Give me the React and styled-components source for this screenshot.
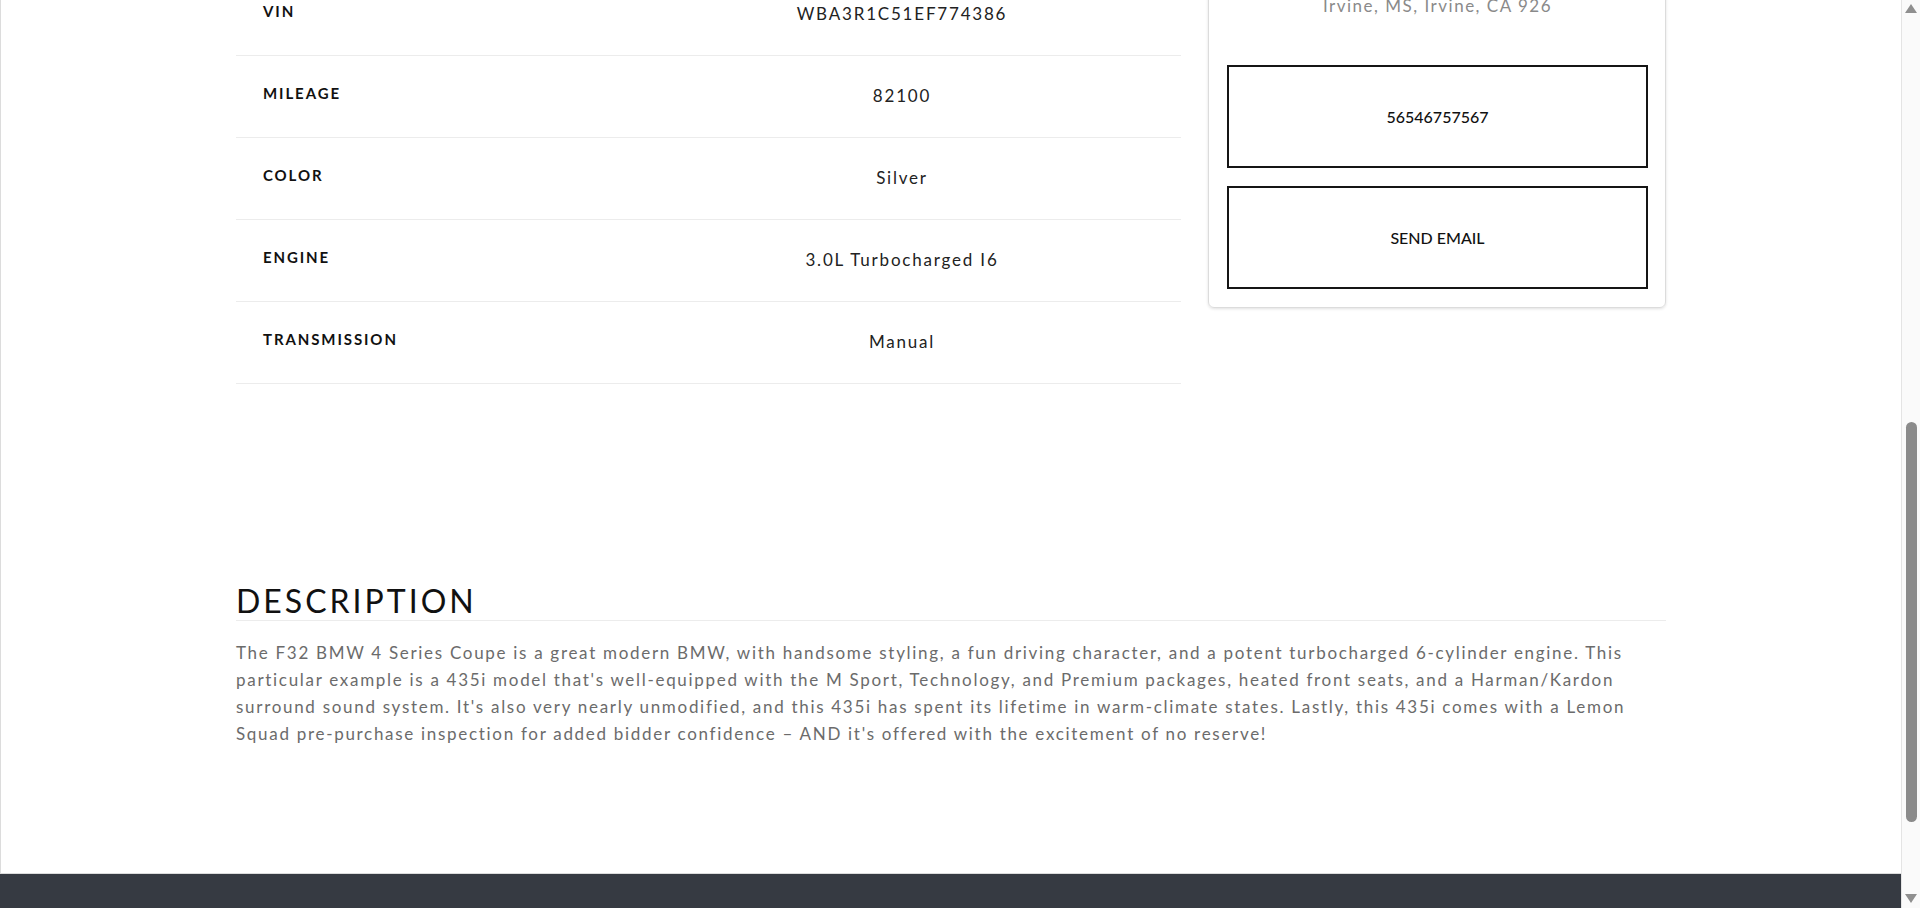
import React from "react";
import styled, { createGlobalStyle } from "styled-components";

const GlobalStyle = createGlobalStyle`
  body {
    margin: 0;
    font-family: Lato, "Open Sans", sans-serif;
    background: #fff;
  }
`;

const Page = styled.div`
  height: 100vh;
  display: flex;
  overflow: hidden;
`;

const Viewport = styled.div`
  flex: 1;
  min-width: 0;
  display: flex;
  flex-direction: column;
`;

const Main = styled.main`
  flex: 1;
  overflow: hidden;
  border-left: 1px solid #dcdcdc;
  border-bottom: 1px solid #dcdcdc;
`;

const Container = styled.div`
  width: 1430px;
  margin: -26px auto 0;
`;

const TopSection = styled.section`
  display: grid;
  grid-template-columns: 945px 458px;
  column-gap: 27px;
  align-items: start;
`;

const SpecTable = styled.div`
  display: flex;
  flex-direction: column;
`;

const SpecRow = styled.div`
  display: grid;
  grid-template-columns: 387px 1fr;
  height: 81px;
  border-bottom: 1px solid #ececec;
`;

const SpecLabel = styled.div`
  padding: 28px 0 0 27px;
  font-size: 15px;
  line-height: 18px;
  font-weight: 700;
  letter-spacing: 1.9px;
  color: #111;
  text-transform: uppercase;
`;

const SpecValue = styled.div`
  padding-top: 29px;
  text-align: center;
  font-size: 17px;
  line-height: 22px;
  font-weight: 400;
  letter-spacing: 1.8px;
  color: #222;
`;

const DealerCard = styled.aside`
  border: 1px solid #dcdcdc;
  border-radius: 6px;
  box-shadow: 0 1px 3px rgba(0, 0, 0, 0.12);
  padding: 19px 17px 18px 18px;
  display: flex;
  flex-direction: column;
`;

const Address = styled.p`
  margin: 0 0 47px;
  text-align: center;
  font-size: 17px;
  line-height: 24px;
  letter-spacing: 1.5px;
  color: #8a8a8a;
`;

const ContactButton = styled.button`
  height: 103px;
  margin-bottom: ${(p) => (p.$last ? "0" : "18px")};
  border: 2px solid #151515;
  background: #fff;
  font-family: Lato, "Open Sans", sans-serif;
  font-size: 16px;
  font-weight: 500;
  color: #111;
  cursor: pointer;
`;

const Description = styled.section`
  margin-top: 198px;
`;

const Heading = styled.h2`
  margin: 0;
  font-size: 32px;
  line-height: 38px;
  font-weight: 400;
  letter-spacing: 3px;
  color: #111;
  border-bottom: 1px solid #ececec;
`;

const Body = styled.p`
  margin: 18px 0 0;
  font-size: 17px;
  line-height: 27px;
  letter-spacing: 1.7px;
  color: #6b6b6b;
`;

const Footer = styled.footer`
  height: 34px;
  flex-shrink: 0;
  background: #363a42;
`;

const ScrollTrack = styled.div`
  width: 18px;
  flex-shrink: 0;
  border-left: 1px solid #e4e4e4;
  background: #fafafa;
  display: flex;
  flex-direction: column;
  align-items: center;
  padding: 4px 0 5px;
`;

const Arrow = styled.span`
  width: 0;
  height: 0;
  border-left: 6px solid transparent;
  border-right: 6px solid transparent;
  ${(p) =>
    p.$down
      ? "border-top: 9px solid #8f8f8f; margin-top: auto;"
      : "border-bottom: 9px solid #8f8f8f;"}
`;

const Thumb = styled.span`
  width: 11px;
  height: 400px;
  margin-top: 409px;
  border-radius: 6px;
  background: #8b8b8b;
`;

const specs = [
  ["VIN", "WBA3R1C51EF774386"],
  ["Mileage", "82100"],
  ["Color", "Silver"],
  ["Engine", "3.0L Turbocharged I6"],
  ["Transmission", "Manual"],
];

export default function App() {
  return (
    <>
      <GlobalStyle />
      <Page>
        <Viewport>
          <Main>
            <Container>
              <TopSection>
                <SpecTable>
                  {specs.map(([label, value]) => (
                    <SpecRow key={label}>
                      <SpecLabel>{label}</SpecLabel>
                      <SpecValue>{value}</SpecValue>
                    </SpecRow>
                  ))}
                </SpecTable>
                <DealerCard>
                  <Address>Irvine, MS, Irvine, CA 926</Address>
                  <ContactButton>56546757567</ContactButton>
                  <ContactButton $last>SEND EMAIL</ContactButton>
                </DealerCard>
              </TopSection>
              <Description>
                <Heading>DESCRIPTION</Heading>
                <Body>
                  The F32 BMW 4 Series Coupe is a great modern BMW, with
                  handsome styling, a fun driving character, and a potent
                  turbocharged 6-cylinder engine. This particular example is a
                  435i model that's well-equipped with the M Sport, Technology,
                  and Premium packages, heated front seats, and a Harman/Kardon
                  surround sound system. It's also very nearly unmodified, and
                  this 435i has spent its lifetime in warm-climate states.
                  Lastly, this 435i comes with a Lemon Squad pre-purchase
                  inspection for added bidder confidence – AND it's offered with
                  the excitement of no reserve!
                </Body>
              </Description>
            </Container>
          </Main>
          <Footer />
        </Viewport>
        <ScrollTrack>
          <Arrow />
          <Thumb />
          <Arrow $down />
        </ScrollTrack>
      </Page>
    </>
  );
}
